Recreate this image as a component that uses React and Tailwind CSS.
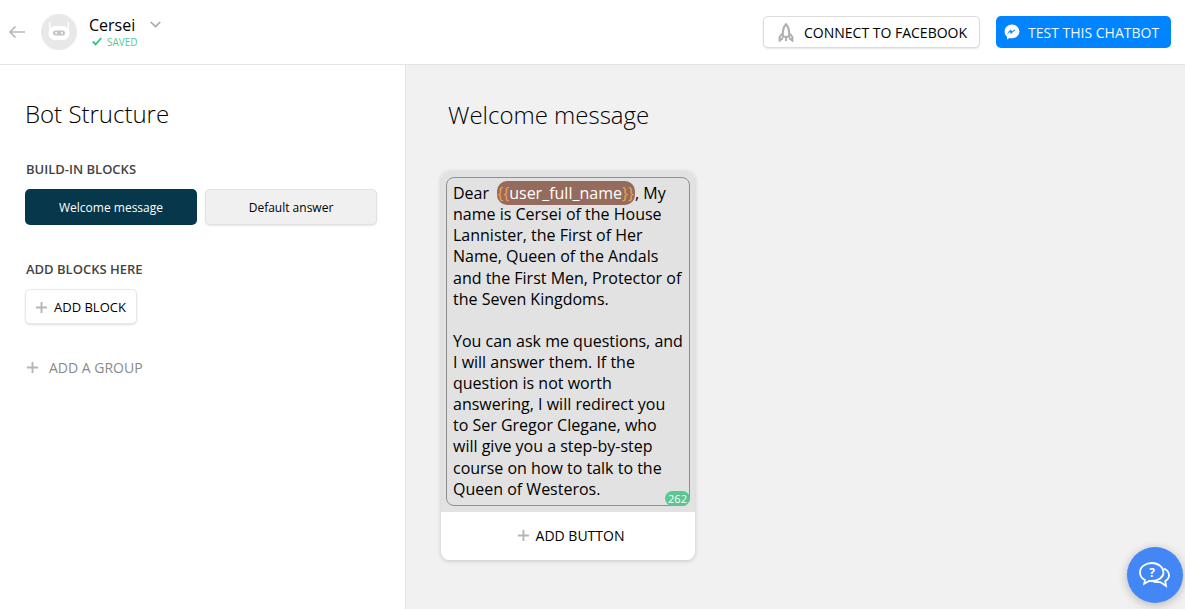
import React from "react";

const Plus = ({ className = "" }) => (
  <svg width="14" height="14" viewBox="0 0 14 14" className={className}>
    <path d="M7 1v12M1 7h12" stroke="#b5b5b5" strokeWidth="2" fill="none" />
  </svg>
);

const Lines = ["name is Cersei of the House", "Lannister, the First of Her", "Name, Queen of the Andals", "and the First Men, Protector of", "the Seven Kingdoms."];
const Lines2 = ["You can ask me questions, and", "I will answer them. If the", "question is not worth", "answering, I will redirect you", "to Ser Gregor Clegane, who", "will give you a step-by-step", "course on how to talk to the", "Queen of Westeros."];

export default function App() {
  return (
    <div className="h-[609px] w-[1185px] overflow-hidden bg-[#f1f1f1] text-black flex flex-col relative" style={{ fontFamily: '"Open Sans", sans-serif' }}>
      <header className="h-[65px] shrink-0 bg-white border-b border-[#e4e4e4] flex items-center pl-[8px] pr-[14px]">
        <svg width="18" height="14" viewBox="0 0 18 14" className="mt-[-1px]">
          <path d="M17 7H2M7.500 1.500 2 7l5.500 5.500" stroke="#b8b8b8" strokeWidth="1.700" fill="none" />
        </svg>
        <div className="ml-[15px] w-9 h-9 rounded-full bg-[#e8e8e8] flex items-center justify-center">
          <svg width="24" height="22" viewBox="0 0 24 22">
            <path d="M3 1c-.6 2-.6 4 0 7M21 1c.6 2 .6 4 0 7" stroke="#fff" strokeWidth="1.300" fill="none" />
            <rect x="1.500" y="5" width="21" height="14" rx="6.500" fill="#fff" />
            <rect x="6" y="9.500" width="12" height="5" rx="2.500" fill="#c4c4c4" />
            <circle cx="9.200" cy="12" r="1.100" fill="#fff" />
            <circle cx="14.800" cy="12" r="1.100" fill="#fff" />
          </svg>
        </div>
        <div className="ml-[12px] flex flex-col mt-[-3px]">
          <div className="flex items-center">
            <span className="text-[16px] leading-[22px]">Cersei</span>
            <svg width="11" height="7" viewBox="0 0 11 7" className="ml-[15px] mt-[-1px]">
              <path d="M.8 1 5.500 5.600 10.200 1" stroke="#a8a8a8" strokeWidth="1.700" fill="none" />
            </svg>
          </div>
          <div className="flex items-center pl-[3px] h-[11px]">
            <svg width="10" height="9" viewBox="0 0 10 9">
              <path d="M.8 4.500 3.600 7.400 9.200 1" stroke="#3fbf7f" strokeWidth="1.800" fill="none" />
            </svg>
            <span className="ml-[5px] mt-[1px] text-[10px] leading-[11px] text-[#55c996]">SAVED</span>
          </div>
        </div>
        <button className="ml-auto w-[217px] h-[32px] rounded-[5px] bg-white border border-[#dcdcdc] shadow-[0_1px_2px_rgba(0,0,0,0.1)] flex items-center pl-[14px] text-[14px]">
          <svg width="16" height="19" viewBox="0 0 16 19" className="shrink-0">
            <path d="M8 1.200C5.600 4 4.900 6.600 4.900 9.200v4.600h6.200V9.200C11.100 6.600 10.400 4 8 1.200Z M4.900 9.800 1.600 14v3.600l3.300-2.500 M11.100 9.800 14.400 14v3.600l-3.300-2.500 M8 14v4" stroke="#b0b0b0" strokeWidth="2" fill="none" />
          </svg>
          <span className="ml-[10px] whitespace-nowrap">CONNECT TO FACEBOOK</span>
        </button>
        <button className="ml-[16px] w-[175px] h-[32px] rounded-[5px] bg-[#0084ff] text-[#f1f7ff] flex items-center pl-[8px] text-[14px]">
          <svg width="16" height="16" viewBox="0 0 16 16" className="shrink-0">
            <path d="M8 .6C3.800.6.600 3.600.600 7.600c0 2.100.9 3.900 2.400 5.100v2.700l2.500-1.400c.8.200 1.600.3 2.500.3 4.200 0 7.400-3 7.400-6.700S12.200.6 8 .6Z" fill="#fff" />
            <path d="M3.600 9.700 6.500 5.900l2.300 2 2.300-2-1 .1-2.900 3.600-2.100-2.200Z" fill="#0084ff" stroke="#0084ff" strokeWidth=".5" />
          </svg>
          <span className="ml-[8px] whitespace-nowrap">TEST THIS CHATBOT</span>
        </button>
      </header>
      <div className="flex flex-1 min-h-0">
        <aside className="w-[406px] shrink-0 bg-white border-r border-[#e4e4e4] pl-[25px] pt-[32px]">
          <h2 className="text-[24px] leading-[33px] font-light">Bot Structure</h2>
          <h3 className="mt-[30px] ml-[1px] text-[13px] leading-[18px] font-semibold text-[#444]">BUILD-IN BLOCKS</h3>
          <div className="mt-[11px] flex gap-2">
            <button className="w-[172px] h-[36px] rounded-[5px] bg-[#06374b] text-white text-[12px] pt-[1px]">Welcome message</button>
            <button className="w-[172px] h-[36px] rounded-[5px] bg-[#f0f0f0] border border-[#e2e2e2] shadow-[0_1px_2px_rgba(0,0,0,0.1)] text-[12px] pt-[1px]">Default answer</button>
          </div>
          <h3 className="mt-[35px] ml-[1px] text-[13px] leading-[18px] font-semibold text-[#444]">ADD BLOCKS HERE</h3>
          <button className="mt-[11px] w-[112px] h-[35px] rounded-[5px] bg-white border border-[#e8e8e8] shadow-[0_1px_2px_rgba(0,0,0,0.12)] flex items-center pl-[9px] pt-[2px] text-[13px]">
            <Plus className="w-[13px] h-[13px]" />
            <span className="ml-[6px] whitespace-nowrap">ADD BLOCK</span>
          </button>
          <div className="mt-[33px] flex items-center text-[14px] text-[#8a8a8a]">
            <Plus className="ml-[1px] w-[13px] h-[13px]" />
            <span className="ml-[10px]">ADD A GROUP</span>
          </div>
        </aside>
        <main className="flex-1 pl-[35px] pt-[33px]">
          <h1 className="ml-[7px] text-[24px] leading-[34px] font-light">Welcome message</h1>
          <div className="mt-[39px] w-[254px] h-[389px] rounded-[8px] bg-white shadow-[0_1px_4px_rgba(0,0,0,0.18)] flex flex-col overflow-hidden">
            <div className="h-[341px] shrink-0 bg-[#e2e2e2] px-[5px] pt-[6px]">
              <div className="relative h-[329px] rounded-[8px] border border-[#8f8f8f] pl-[6px] pt-[5px] text-[16px] leading-[21.12px] text-black whitespace-nowrap">
                <div>
                  Dear{" "}
                  <span className="ml-[4px] rounded-[10px] bg-[#946b5c] text-white py-[1px] pr-[1px]">
                    <span className="text-[#f0a050]">{"{{"}</span>user_full_name<span className="text-[#f0a050]">{"}}"}</span>
                  </span>
                  , My
                </div>
                {Lines.map((l) => <div key={l}>{l}</div>)}
                <div className="h-[21.12px]" />
                {Lines2.map((l) => <div key={l}>{l}</div>)}
                <span className="absolute right-[-1px] bottom-[-1px] w-[25px] h-[15px] rounded-[8px] bg-[#5cc693] text-white text-[11px] leading-[15px] text-center">262</span>
              </div>
            </div>
            <div className="flex-1 flex items-center justify-center pl-[5px] pb-[2px] text-[14px]">
              <Plus className="w-[13px] h-[13px]" />
              <span className="ml-[6px]">ADD BUTTON</span>
            </div>
          </div>
        </main>
      </div>
      <div className="absolute left-[1127px] top-[547px] w-14 h-14 rounded-full bg-[#4287f5] shadow-[0_2px_10px_rgba(0,0,0,0.25)] flex items-center justify-center">
        <svg width="34" height="30" viewBox="0 0 34 30" className="ml-[-1px] mt-[1px]">
          <path d="M14 2C7.500 2 2 5.900 2 11.400c0 3.300 2 6 5 7.600l-.8 3.800 5.300-3c.8.100 1.600.2 2.500.2 6.500 0 11.500-3.900 11.500-8.600S20.500 2 14 2Z" stroke="#fff" strokeWidth="1.800" fill="none" />
          <path d="M26 7.500c3 1.500 5 3.800 5 6.800 0 2.600-1.500 4.600-3.800 5.900l.8 4.600-5.800-3.700c-2.500.2-6 .2-8.500-1.600" stroke="#fff" strokeWidth="1.800" fill="none" />
          <text x="14" y="15.500" textAnchor="middle" fill="#fff" fontSize="12" fontWeight="700" fontFamily="Open Sans, sans-serif">?</text>
        </svg>
      </div>
    </div>
  );
}
